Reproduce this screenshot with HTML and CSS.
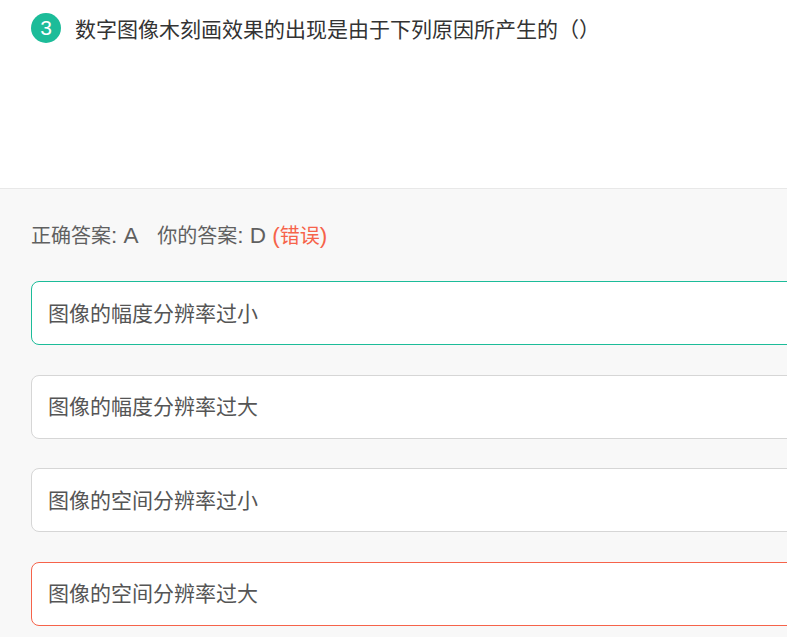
FILE: index.html
```html
<!DOCTYPE html>
<html lang="zh-CN">
<head>
<meta charset="utf-8">
<title>题目</title>
<link rel="stylesheet" href="styles.css">
</head>
<body>
<div class="page">
  <section class="question">
    <span class="badge">3</span>
    <h2 class="title">数字图像木刻画效果的出现是由于下列原因所产生的（）</h2>
  </section>
  <section class="review">
    <p class="result"><span class="cjk">正确答案</span>: A&nbsp;&nbsp;&nbsp;<span class="cjk">你的答案</span>: D <span class="wrong">(<span class="cjk">错误</span>)</span></p>
    <ul class="options">
      <li class="option correct">图像的幅度分辨率过小</li>
      <li class="option">图像的幅度分辨率过大</li>
      <li class="option">图像的空间分辨率过小</li>
      <li class="option chosen">图像的空间分辨率过大</li>
    </ul>
  </section>
</div>
</body>
</html>
```
FILE: styles.css
```css
html, body {
  margin: 0;
  padding: 0;
  overflow: hidden;
  background: #f8f8f8;
}
body {
  font-family: "Liberation Sans", "Noto Sans CJK SC", sans-serif;
}
.page {
  width: 900px;
}
.question {
  display: flex;
  align-items: flex-start;
  height: 189px;
  box-sizing: border-box;
  padding: 13px 0 0 31px;
  background: #fff;
  border-bottom: 1px solid #e8e8e8;
}
.badge {
  flex: none;
  width: 30px;
  height: 30px;
  border-radius: 50%;
  background: #1cbc99;
  color: #fff;
  font-family: "Liberation Sans", sans-serif;
  font-size: 21px;
  line-height: 30px;
  text-align: center;
}
.title {
  margin: 2px 0 0 14px;
  font-size: 21px;
  font-weight: normal;
  line-height: 30px;
  color: #333;
}
.review {
  padding: 30px 0 0 31px;
}
.result {
  margin: 0;
  font-size: 22.5px;
  line-height: 34px;
  color: #606060;
}
.cjk {
  font-size: 20px;
}
.wrong {
  color: #f6634a;
}
.options {
  list-style: none;
  margin: 28px 0 0;
  padding: 0;
  display: flex;
  flex-direction: column;
  gap: 29.67px;
}
.option {
  height: 64px;
  box-sizing: border-box;
  display: flex;
  align-items: center;
  padding: 0 0 3px 16px;
  background: #fff;
  border: 1px solid #d6d6d6;
  border-radius: 8px;
  font-size: 21px;
  color: #555;
}
.option.correct {
  border-color: #1cbc99;
}
.option.chosen {
  border-color: #f6634a;
}
```
